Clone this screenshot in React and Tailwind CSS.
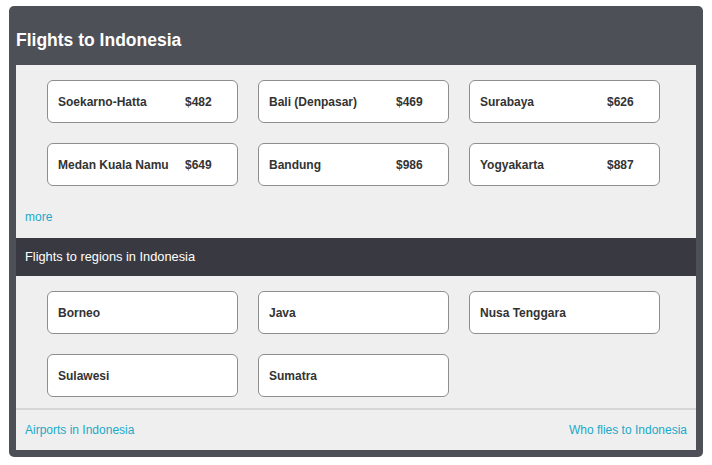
const airports = [
	{ name: "Soekarno-Hatta", price: "$482" },
	{ name: "Bali (Denpasar)", price: "$469" },
	{ name: "Surabaya", price: "$626" },
	{ name: "Medan Kuala Namu", price: "$649" },
	{ name: "Bandung", price: "$986" },
	{ name: "Yogyakarta", price: "$887" },
];

const regions = ["Borneo", "Java", "Nusa Tenggara", "Sulawesi", "Sumatra"];

function Card({ name, price }) {
	return (
		<a
			href="#"
			className="flex h-[43px] items-center rounded-[6px] border border-[#8e8e8e] bg-white pl-[10px] text-[12px] font-bold text-[#333]"
		>
			<span className="w-[127px]">{name}</span>
			{price && <span>{price}</span>}
		</a>
	);
}

export default function App() {
	return (
		<div
			className="px-[9px] pt-[6px] pb-[7px]"
			style={{ fontFamily: '"Liberation Sans", Arial, sans-serif' }}
		>
			<div className="rounded-[5px] bg-[#4e5058] px-[7px] pb-[7px]">
				<h1 className="flex h-[59px] items-center pt-[9px] text-[17.5px] font-bold text-white">
					Flights to Indonesia
				</h1>
				<div className="bg-[#efefef]">
					{/* AIRPORTS */}
					<div className="grid grid-cols-[191px_191px_191px] gap-x-[20px] gap-y-[20px] pt-[15px] pl-[31px]">
						{airports.map((item) => (
							<Card key={item.name} name={item.name} price={item.price} />
						))}
					</div>
					<div className="flex h-[52px] items-center pl-[9px] pt-[10px]">
						<a href="#" className="text-[12px] text-[#1aa9c9]">
							more
						</a>
					</div>
					{/* REGIONS */}
					<div className="flex h-[38px] items-center bg-[#393a41] pl-[9px] text-[12.8px] text-white">
						Flights to regions in Indonesia
					</div>
					<div className="grid grid-cols-[191px_191px_191px] gap-x-[20px] gap-y-[20px] pt-[15px] pb-[11px] pl-[31px]">
						{regions.map((name) => (
							<Card key={name} name={name} />
						))}
					</div>
					<div className="flex h-[42px] items-center justify-between border-t-2 border-[#d6d6d6] px-[9px] text-[12px] text-[#1aa9c9]">
						<a href="#">Airports in Indonesia</a>
						<a href="#">Who flies to Indonesia</a>
					</div>
				</div>
			</div>
		</div>
	);
}
